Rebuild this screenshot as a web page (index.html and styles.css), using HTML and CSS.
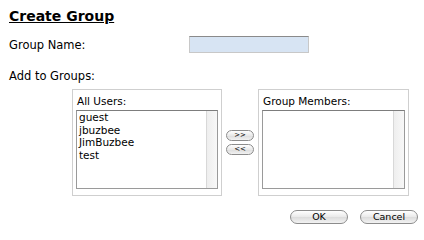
FILE: index.html
```html
<!DOCTYPE html>
<html lang="en">
<head>
    <meta charset="UTF-8">
    <title>Create Group</title>
    <link rel="stylesheet" href="styles.css">
</head>
<body>
    <form class="group-form" onsubmit="return false;">
        <h2 class="title">Create Group</h2>
        <div class="name-row">
            <label for="groupname">Group Name:</label>
            <input type="text" id="groupname" class="name-input">
        </div>
        <p class="section-label">Add to Groups:</p>
        <div class="lists">
            <div class="list-box">
                <div class="list-label">All Users:</div>
                <div class="list">
                    <div class="list-items">
                        <div>guest</div>
                        <div>jbuzbee</div>
                        <div>JimBuzbee</div>
                        <div>test</div>
                    </div>
                    <div class="scroll-track"></div>
                </div>
            </div>
            <div class="move-buttons">
                <button type="button" class="pill small">&gt;&gt;</button>
                <button type="button" class="pill small">&lt;&lt;</button>
            </div>
            <div class="list-box wide">
                <div class="list-label">Group Members:</div>
                <div class="list">
                    <div class="list-items"></div>
                    <div class="scroll-track"></div>
                </div>
            </div>
        </div>
        <div class="actions">
            <button type="submit" class="pill">OK</button>
            <button type="button" class="pill">Cancel</button>
        </div>
    </form>
</body>
</html>
```

FILE: styles.css
```css
body {
    margin: 0;
    background-color: white;
    font-family: "DejaVu Sans", Verdana, sans-serif;
    font-size: 11px;
    color: #000;
}
.group-form {
    padding: 8px 6px 0 8px;
}
.title {
    margin: 0;
    font-size: 14px;
    font-weight: bold;
    text-decoration: underline;
    line-height: 16px;
    padding-left: 1px;
}
.name-row {
    display: flex;
    align-items: center;
    margin-top: 12px;
    padding-left: 1px;
}
.name-row label {
    width: 180px;
    font-size: 11.5px;
}
.name-input {
    width: 120px;
    height: 17px;
    box-sizing: border-box;
    border: 1px solid #c8c8c8;
    border-top-color: #8a8a8a;
    background-color: #d7e4f3;
    padding: 0;
    margin: 0;
}
.section-label {
    margin: 16px 0 0 1px;
    font-size: 11.5px;
}
.lists {
    display: flex;
    align-items: center;
    margin: 6px 0 0 64px;
}
.list-box {
    width: 150px;
    height: 107px;
    box-sizing: border-box;
    border: 1px solid #cfcfcf;
    padding: 3px 3px 0 3px;
}
.list-box.wide {
    width: 151px;
}
.list-label {
    font-size: 10.5px;
    line-height: 13px;
    margin: 2px 0 2px 1px;
}
.list {
    display: flex;
    height: 79px;
    box-sizing: border-box;
    border: 1px solid #9a9a9a;
    border-top-color: #7d7d7d;
}
.list-items {
    flex: 1;
    padding: 0 2px;
    font-size: 10.5px;
    line-height: 12.6px;
}
.scroll-track {
    width: 10px;
    border-left: 1px solid #d8d8d8;
    background: linear-gradient(to right, #eeeeee, #f8f8f8);
}
.move-buttons {
    display: flex;
    flex-direction: column;
    gap: 3px;
    margin: 0 4px 0 4px;
}
.pill {
    font-family: "DejaVu Sans", Verdana, sans-serif;
    border: 1px solid #8c8c8c;
    border-radius: 8px;
    background: linear-gradient(#ffffff, #e9e9e9 50%, #dcdcdc 51%, #f2f2f2);
    padding: 0;
    margin: 0;
    color: #000;
}
.pill.small {
    width: 28px;
    height: 11px;
    font-size: 7px;
    line-height: 9px;
}
.actions {
    display: flex;
    justify-content: flex-end;
    gap: 12px;
    margin-top: 14px;
}
.actions .pill {
    width: 58px;
    height: 14px;
    font-size: 9.5px;
    line-height: 12px;
}
```
